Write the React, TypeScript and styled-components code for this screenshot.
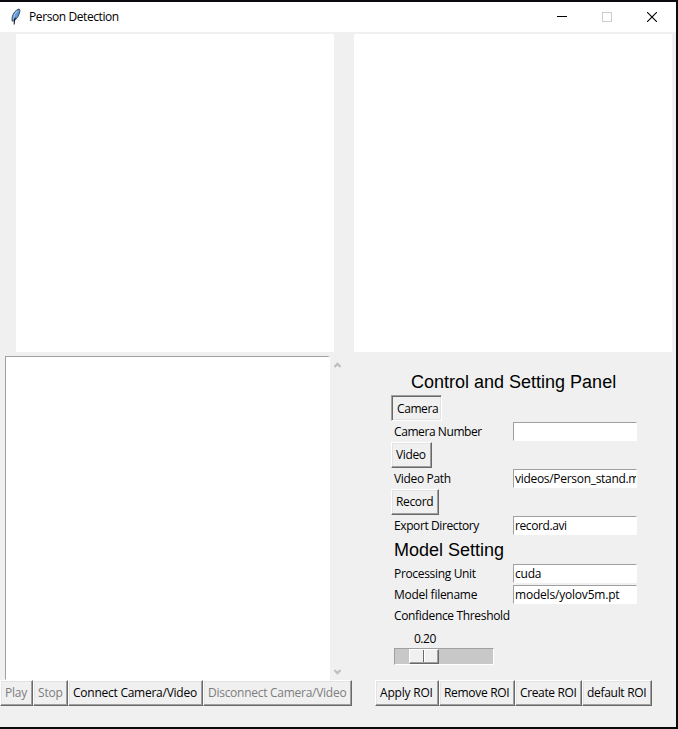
import React from "react";
import styled, { createGlobalStyle } from "styled-components";

const Global = createGlobalStyle`
  * { box-sizing: border-box; }
  body { margin: 0; background: #f0f0f0; overflow: hidden; }
`;

const Window = styled.main`
  width: 678px;
  height: 729px;
  display: flex;
  flex-direction: column;
  border: solid #0b0b0f;
  border-width: 2px 2px 2px 0;
  background: #f0f0f0;
  color: #000;
  font: 12px/16px "Open Sans", "Noto Sans", sans-serif;
`;

const TitleBar = styled.header`
  height: 30px;
  flex: none;
  display: flex;
  align-items: center;
  background: #fff;
  padding-left: 9px;
`;

const Caption = styled.div`
  flex: 1;
  padding-left: 6px;
`;

const WindowButton = styled.div`
  width: 45px;
  height: 29px;
  display: flex;
  align-items: center;
  justify-content: center;
`;

const WindowButtons = styled.div`
  display: flex;
  margin-right: 2px;
`;

const Fit = styled.span<{ $ls?: number }>`
  white-space: pre;
  letter-spacing: ${(p) => p.$ls ?? 0}px;
`;

const Views = styled.section`
  display: flex;
  gap: 20px;
  padding: 2px 0 4px 16px;
`;

const View = styled.div`
  width: 318px;
  height: 318px;
  background: #fff;
`;

const Lower = styled.section`
  display: flex;
  height: 324px;
`;

const Log = styled.div`
  width: 325px;
  margin-left: 5px;
  flex: none;
  background: #fff;
  border: solid;
  border-width: 1px 2px 1px 1px;
  border-color: #a0a0a0 #fff #fff #a0a0a0;
`;

const ScrollBar = styled.div`
  width: 15px;
  flex: none;
  display: flex;
  flex-direction: column;
  justify-content: space-between;
  align-items: center;
  padding: 6px 0 5px;
`;

const Panel = styled.div`
  margin-left: 46px;
  padding-top: 14px;
  display: flex;
  flex-direction: column;
  align-items: flex-start;
`;

const Heading = styled.h2<{ $indent: number; $height: number; $drop?: number }>`
  margin: 0;
  height: ${(p) => p.$height}px;
  padding: ${(p) => p.$drop ?? 0}px 0 0 ${(p) => p.$indent}px;
  font: 400 18px/${(p) => p.$height}px "Liberation Sans", Arial, sans-serif;
  white-space: nowrap;
`;

const Row = styled.div`
  display: grid;
  grid-template-columns: 122px 124px;
  align-items: center;
  height: 21px;
`;

const Label = styled.label`
  padding-left: 3px;
`;

const Entry = styled.div`
  height: 19px;
  background: #fff;
  border: solid;
  border-width: 1px;
  border-color: #a0a0a0 #fff #fff #a0a0a0;
  padding-left: 1px;
  line-height: 17px;
  overflow: hidden;
`;

const Button = styled.button<{ $w: number; $sunken?: boolean }>`
  width: ${(p) => p.$w}px;
  height: 26px;
  flex: none;
  padding: ${(p) => (p.$sunken ? "2px 0 0 5px" : "0 0 0 4px")};
  display: flex;
  align-items: center;
  justify-content: flex-start;
  font: inherit;
  color: #000;
  background: #f0f0f0;
  border: 1px solid;
  border-color: ${(p) => (p.$sunken ? "#a0a0a0 #fff #fff #a0a0a0" : "#fff #696969 #696969 #fff")};
  box-shadow: ${(p) =>
    p.$sunken
      ? "inset 1px 1px #696969, inset -1px -1px #e3e3e3"
      : "inset -1px -1px #a0a0a0, inset 1px 1px #e3e3e3"};
  &:disabled { color: #7d7d7d; }
`;

const Value = styled.div`
  height: 17px;
  padding: 5px 0 0 23px;
  line-height: 16px;
`;

const Trough = styled.div`
  width: 100px;
  height: 17px;
  margin: 5px 0 0 3px;
  background: #c8c8c8;
  border: 1px solid;
  border-color: #a0a0a0 #fff #fff #a0a0a0;
  padding-left: 14px;
`;

const Thumb = styled.div`
  width: 30px;
  height: 15px;
  display: flex;
  background: #f0f0f0;
  border: 1px solid;
  border-color: #fff #696969 #696969 #fff;
  box-shadow: inset -1px -1px #a0a0a0;
`;

const Notch = styled.div`
  width: 14px;
  height: 12px;
  border-right: 1px solid #696969;
  box-shadow: 1px 0 #fff;
`;

const Actions = styled.footer`
  display: flex;
`;

const Group = styled.div<{ $start?: number }>`
  display: flex;
  margin-left: ${(p) => p.$start ?? 0}px;
`;

const Feather = () => (
  <svg width="14" height="18" viewBox="0 0 14 18">
    <path d="M3.2 13.2C2.4 8.5 4.6 3.8 8.8 1.4 10.8.4 11.2 1.7 10.8 3.5 10 8.2 7.4 11.7 4.2 13.1Z" fill="#5b98dc" stroke="#39434e" strokeWidth=".9" />
    <path d="M6.2 9.5Q5.4 12 5.1 16.5" fill="none" stroke="#101820" strokeWidth="1.1" />
    <path d="M4.6 10.6Q4.8 6 8.3 3" fill="none" stroke="#b7d7f3" strokeWidth="1" />
  </svg>
);

const Arrow = ({ down }: { down?: boolean }) => (
  <svg width="8" height="6" viewBox="0 0 8 6">
    <path d={down ? "M.4 1 3.5 4.1 6.6 1" : "M.4 5 3.5 1.9 6.6 5"} fill="none" stroke="#bfbfbf" strokeWidth="2.2" />
  </svg>
);

type FieldProps = { label: string; ls?: number; value?: string; vls?: number };
const Field = ({ label, ls, value, vls }: FieldProps) => (
  <Row>
    <Label><Fit $ls={ls}>{label}</Fit></Label>
    {value !== undefined && <Entry><Fit $ls={vls}>{value}</Fit></Entry>}
  </Row>
);

type PushProps = { text: string; w: number; ls?: number; disabled?: boolean; sunken?: boolean };
const Push = ({ text, w, ls, disabled, sunken }: PushProps) => (
  <Button $w={w} $sunken={sunken} disabled={disabled}><Fit $ls={ls}>{text}</Fit></Button>
);

export default function App() {
  return (
    <>
      <Global />
      <Window>
        <TitleBar>
          <Feather />
          <Caption><Fit $ls={-0.41}>Person Detection</Fit></Caption>
          <WindowButtons>
            <WindowButton>
              <svg width="10" height="10" shapeRendering="crispEdges"><path d="M0 4.5H10" stroke="#000" /></svg>
            </WindowButton>
            <WindowButton>
              <svg width="10" height="10" shapeRendering="crispEdges"><path d="M.5.5H9.5V9.5H.5Z" fill="none" stroke="#ccc" /></svg>
            </WindowButton>
            <WindowButton>
              <svg width="10" height="10"><path d="M0 0 10 10M10 0 0 10" stroke="#000" strokeWidth="1.1" /></svg>
            </WindowButton>
          </WindowButtons>
        </TitleBar>
        <Views><View /><View /></Views>
        <Lower>
          <Log />
          <ScrollBar><Arrow /><Arrow down /></ScrollBar>
          <Panel>
            <Heading $indent={20} $height={25}>Control and Setting Panel</Heading>
            <Push text="Camera" w={51} ls={-0.42} sunken />
            <Field label="Camera Number" ls={-0.42} value="" />
            <Push text="Video" w={41} ls={-0.35} />
            <Field label="Video Path" ls={-0.33} value="videos/Person_stand.mp4" vls={-0.3} />
            <Push text="Record" w={48} ls={-0.35} />
            <Field label="Export Directory" ls={-0.4} value="record.avi" vls={-0.4} />
            <Heading $indent={3} $height={27} $drop={1}>Model Setting</Heading>
            <Field label="Processing Unit" ls={-0.33} value="cuda" vls={-0.2} />
            <Field label="Model filename" ls={-0.27} value="models/yolov5m.pt" vls={-0.2} />
            <Field label="Confidence Threshold" ls={-0.34} />
            <Value><Fit $ls={-0.5}>0.20</Fit></Value>
            <Trough><Thumb><Notch /></Thumb></Trough>
          </Panel>
        </Lower>
        <Actions>
          <Group>
            <Push text="Play" w={33} ls={-0.2} disabled />
            <Push text="Stop" w={35} ls={-0.2} disabled />
            <Push text="Connect Camera/Video" w={135} ls={-0.25} />
            <Push text="Disconnect Camera/Video" w={149} ls={-0.27} disabled />
          </Group>
          <Group $start={23}>
            <Push text="Apply ROI" w={64} ls={-0.2} />
            <Push text="Remove ROI" w={76} ls={-0.3} />
            <Push text="Create ROI" w={67} ls={-0.36} />
            <Push text="default ROI" w={70} ls={-0.3} />
          </Group>
        </Actions>
      </Window>
    </>
  );
}
